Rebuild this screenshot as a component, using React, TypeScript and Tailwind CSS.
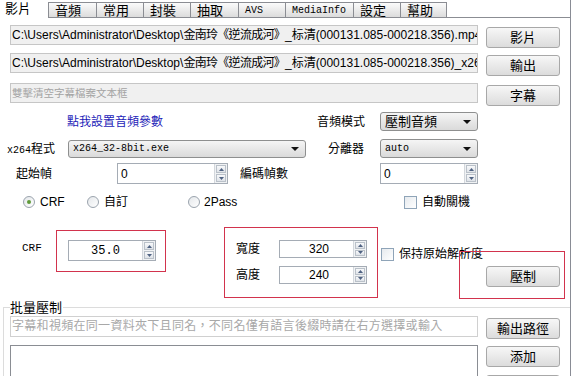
import React from 'react';

const sans = "font-['Liberation_Sans','Noto_Sans_CJK_TC',sans-serif]";
const mono = "font-['Liberation_Mono','Noto_Sans_CJK_TC',monospace]";

const tabs = [
  { label: '影片', cls: 'w-[48px]', text: 'text-[13px]' },
  { label: '音頻', cls: 'w-[48px]', text: 'text-[13px]' },
  { label: '常用', cls: 'w-[47px]', text: 'text-[13px]' },
  { label: '封裝', cls: 'w-[47px]', text: 'text-[13px]' },
  { label: '抽取', cls: 'w-[48px]', text: 'text-[13px]' },
  { label: 'AVS', cls: 'w-[47px]', text: `text-[10px] ${mono}` },
  { label: 'MediaInfo', cls: 'w-[68px]', text: `text-[10px] ${mono}` },
  { label: '設定', cls: 'w-[47px]', text: 'text-[13px]' },
  { label: '幫助', cls: 'w-[47px]', text: 'text-[13px]' },
];

const Btn = ({ children }: { children: React.ReactNode }) => (
  <button className="w-[74px] h-[21px] shrink-0 rounded-[3px] border border-[#a8a8a8] bg-linear-to-b from-[#f7f7f7] to-[#dcdcdc] text-[13px] leading-none text-black">
    {children}
  </button>
);

const Combo = ({ className, children }: { className: string; children: React.ReactNode }) => (
  <div
    className={`flex items-center rounded-[3px] border border-[#8e8f8f] bg-linear-to-b from-[#f5f5f5] to-[#dadada] pl-[4px] pr-[6px] ${className}`}
  >
    <div className="flex-1 whitespace-nowrap leading-none">{children}</div>
    <svg width="8" height="4" viewBox="0 0 8 4">
      <path d="M0 0H8L4 4Z" fill="#111" />
    </svg>
  </div>
);

const Spin = ({ className, value, textCls }: { className: string; value: string; textCls: string }) => (
  <div className={`flex border border-[#a5acb5] bg-white ${className}`}>
    <div className={`flex-1 flex items-center text-[12px] leading-none ${textCls}`}>{value}</div>
    <div className="w-[13px] flex flex-col gap-[1px] border-l border-[#d3d7dc] bg-[#f0f2f4] p-[1px]">
      <div className="flex-1 flex items-center justify-center border border-[#bac1c9] bg-linear-to-b from-[#f8f9fb] to-[#dfe3e8]">
        <svg width="5" height="3" viewBox="0 0 5 3">
          <path d="M0 3L2.5 0L5 3Z" fill="#4f6282" />
        </svg>
      </div>
      <div className="flex-1 flex items-center justify-center border border-[#bac1c9] bg-linear-to-b from-[#f8f9fb] to-[#dfe3e8]">
        <svg width="5" height="3" viewBox="0 0 5 3">
          <path d="M0 0H5L2.5 3Z" fill="#4f6282" />
        </svg>
      </div>
    </div>
  </div>
);

const Radio = ({ checked }: { checked?: boolean }) => (
  <div className="w-[12px] h-[12px] rounded-full border border-[#9aa3ad] bg-linear-to-br from-[#e4e7ea] to-[#ffffff] flex items-center justify-center">
    {checked && <div className="w-[4px] h-[4px] rounded-full bg-[#5f9a3a]" />}
  </div>
);

const Check = () => <div className="w-[13px] h-[13px] border border-[#8fa4b8] bg-linear-to-br from-[#e6eaee] to-white" />;

const App: React.FC = () => {
  return (
    <div className={`w-[574px] h-[376px] overflow-hidden bg-white text-black ${sans}`}>
      <div className="w-[571px] h-full border-r border-[#898c95] flex flex-col">
        {/* tabs */}
        <div className="flex items-end h-[18px] shrink-0">
          {tabs.map((t, i) =>
            i === 0 ? (
              <div key={t.label} className={`${t.cls} h-[18px] pl-[5px] pt-[1px] ${t.text} leading-[15px] bg-white`}>
                {t.label}
              </div>
            ) : (
              <div
                key={t.label}
                className={`${t.cls} h-[16px] pl-[6px] border-t border-l border-b border-[#8b8d93] bg-linear-to-b from-[#fbfbfb] to-[#dcdcdc] ${t.text} leading-[15px] ${i === tabs.length - 1 ? 'border-r' : ''}`}
              >
                {t.label}
              </div>
            )
          )}
          <div className="flex-1 h-[16px] border-b border-[#8b8d93]" />
        </div>

        <div className="pl-[10px]">
          {/* file rows */}
          <div className="flex mt-[7px] h-[21px]">
            <div className="w-[468px] h-[20px] border border-[#c6c6c6] bg-[#f0f0f0] px-[1px] text-[12px] leading-[18px] whitespace-nowrap overflow-hidden">
              C:\Users\Administrator\Desktop\<span className="tracking-[-0.7px]">金南玲《逆流成河》</span>_标清(000131.085-000218.356).mp4
            </div>
            <div className="ml-[8px]">
              <Btn>影片</Btn>
            </div>
          </div>
          <div className="flex mt-[7px] h-[21px]">
            <div className="w-[468px] h-[20px] border border-[#c6c6c6] bg-[#f0f0f0] px-[1px] text-[12px] leading-[18px] whitespace-nowrap overflow-hidden">
              C:\Users\Administrator\Desktop\<span className="tracking-[-0.7px]">金南玲《逆流成河》</span>_标清(000131.085-000218.356)_x264.mp4
            </div>
            <div className="ml-[8px]">
              <Btn>輸出</Btn>
            </div>
          </div>
          <div className="flex mt-[9px] h-[21px]">
            <div className="w-[468px] h-[20px] border border-[#c6c6c6] bg-[#f0f0f0] px-[1px] text-[10.5px] leading-[18px] text-[#a3a3a3] whitespace-nowrap overflow-hidden">
              雙擊清空字幕檔案文本框
            </div>
            <div className="ml-[8px]">
              <Btn>字幕</Btn>
            </div>
          </div>

          {/* audio */}
          <div className="flex items-center w-[468px] mt-[8px] h-[19px] text-[12px]">
            <span className="ml-[57px] text-[#1c1cb8]">點我設置音頻參數</span>
            <span className="ml-auto">音頻模式</span>
            <Combo className="ml-[15px] w-[98px] h-[19px] text-[13px]">壓制音頻</Combo>
          </div>

          {/* x264 */}
          <div className="flex items-center w-[468px] mt-[8px] h-[19px] text-[12px]">
            <div className="-ml-[3px] w-[61px] whitespace-nowrap">
              <span className={`${mono} text-[10px]`}>x264</span>程式
            </div>
            <Combo className={`w-[238px] h-[18px] ${mono} text-[10px]`}>x264_32-8bit.exe</Combo>
            <span className="ml-auto">分離器</span>
            <Combo className={`ml-[16px] w-[98px] h-[19px] ${mono} text-[10px]`}>auto</Combo>
          </div>

          {/* frames */}
          <div className="flex items-center w-[468px] mt-[5px] h-[21px] text-[12px]">
            <span className="ml-[6px] w-[101px]">起始幀</span>
            <Spin className="w-[111px] h-[21px]" value="0" textCls="pl-[3px]" />
            <span className="ml-[12px]">編碼幀數</span>
            <Spin className="ml-auto w-[98px] h-[21px]" value="0" textCls="pl-[3px]" />
          </div>

          {/* mode */}
          <div className="flex items-center mt-[11px] h-[14px] text-[12px]">
            <div className="ml-[13px] w-[64px] flex items-center gap-[5px]">
              <Radio checked />
              <span>CRF</span>
            </div>
            <div className="w-[101px] flex items-center gap-[5px]">
              <Radio />
              <span>自訂</span>
            </div>
            <div className="w-[216px] flex items-center gap-[4px]">
              <Radio />
              <span>2Pass</span>
            </div>
            <div className="flex items-center gap-[5px]">
              <Check />
              <span>自動關機</span>
            </div>
          </div>

          {/* crf / size */}
          <div className="relative flex items-start w-[550px] mt-[18px] h-[72px] text-[12px]">
            <span className={`ml-[12px] w-[34px] mt-[15px] ${mono} text-[11px] leading-[12px]`}>CRF</span>
            <div className="mt-[3px] w-[110px] h-[42px] border border-[#d2334d] pl-[11px] pt-[9px]">
              <Spin className="w-[88px] h-[21px]" value="35.0" textCls={`justify-center ${mono} text-[12px]`} />
            </div>
            <div className="ml-[58px] w-[154px] h-[71px] border border-[#d2334d] pl-[11px] pt-[12px]">
              <div className="flex items-center h-[18px]">
                <span className="w-[43px]">寬度</span>
                <Spin className="w-[88px] h-[18px]" value="320" textCls="justify-end pr-[24px]" />
              </div>
              <div className="flex items-center h-[18px] mt-[8px]">
                <span className="w-[43px]">高度</span>
                <Spin className="w-[88px] h-[18px]" value="240" textCls="justify-end pr-[24px]" />
              </div>
            </div>
            <div className="ml-[3px] mt-[18px] flex items-center gap-[5px]">
              <Check />
              <span>保持原始解析度</span>
            </div>
            <div className="ml-auto pt-[39px]">
              <Btn>壓制</Btn>
            </div>
            <div className="pointer-events-none absolute left-[449px] top-[24px] w-[106px] h-[48px] border border-[#d2334d]" />
          </div>
        </div>

        {/* batch */}
        <fieldset className="ml-[3px] mt-[1px] w-[567px] border-t border-l border-[#dcdcdc] pl-[6px]">
          <legend className="text-[13px] leading-[15px] pr-[1px]">批量壓制</legend>
          <div className="flex h-[21px] mt-[1px]">
            <div className="w-[468px] h-[21px] border border-[#d0d0d0] bg-white px-[1px] text-[12px] tracking-[0.3px] leading-[19px] text-[#a8a8a8] whitespace-nowrap overflow-hidden">
              字幕和視頻在同一資料夾下且同名，不同名僅有語言後綴時請在右方選擇或輸入
            </div>
            <div className="ml-[8px]">
              <Btn>輸出路徑</Btn>
            </div>
          </div>
          <div className="flex mt-[8px]">
            <div className="w-[468px] h-[80px] border border-[#8a8d93] bg-white" />
            <div className="ml-[8px] mt-[1px] flex flex-col gap-[8px]">
              <Btn>添加</Btn>
              <Btn>刪除</Btn>
            </div>
          </div>
        </fieldset>
      </div>
    </div>
  );
};

export default App;
